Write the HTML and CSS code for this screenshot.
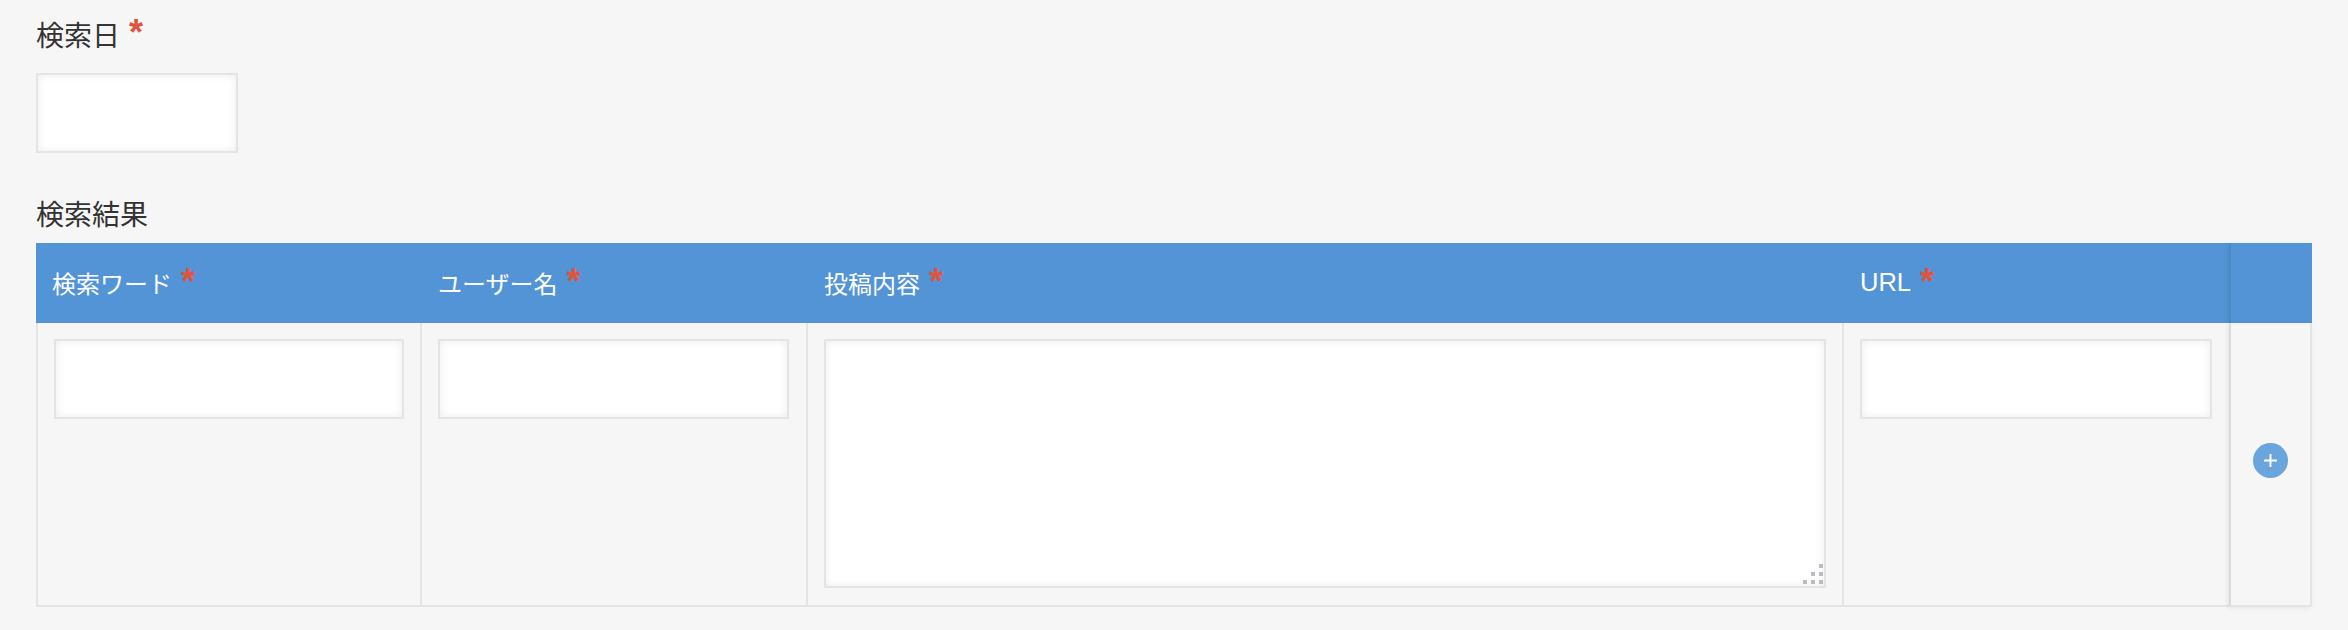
FILE: index.html
```html
<!DOCTYPE html>
<html lang="ja">
<head>
    <meta charset="UTF-8">
    <meta name="viewport" content="width=device-width, initial-scale=1.0">
    <title>検索結果</title>
    <link rel="stylesheet" href="styles.css">
</head>
<body>
    <div class="form">
        <div class="field">
            <div class="field-label">検索日<span class="required">*</span></div>
            <input type="text" class="text-input date-input">
        </div>

        <div class="field-label table-label">検索結果</div>
        <div class="sub-table">
            <div class="head-cell">検索ワード<span class="required">*</span></div>
            <div class="head-cell">ユーザー名<span class="required">*</span></div>
            <div class="head-cell">投稿内容<span class="required">*</span></div>
            <div class="head-cell"><span class="latin-label">URL</span><span class="required">*</span></div>
            <div class="head-cell action-head"></div>

            <div class="body-cell"><input type="text" class="text-input"></div>
            <div class="body-cell"><input type="text" class="text-input wide-input"></div>
            <div class="body-cell">
                <div class="textarea-wrapper">
                    <textarea class="text-area"></textarea>
                    <svg class="grip" viewBox="0 0 20 20">
                        <rect x="16" y="0" width="4" height="4"/>
                        <rect x="8" y="8" width="4" height="4"/>
                        <rect x="16" y="8" width="4" height="4"/>
                        <rect x="0" y="16" width="4" height="4"/>
                        <rect x="8" y="16" width="4" height="4"/>
                        <rect x="16" y="16" width="4" height="4"/>
                    </svg>
                </div>
            </div>
            <div class="body-cell"><input type="text" class="text-input url-input"></div>
            <div class="body-cell action-cell">
                <button class="add-button" aria-label="追加">
                    <svg viewBox="0 0 14 14">
                        <path d="M7 1v12M1 7h12"/>
                    </svg>
                </button>
            </div>
        </div>
    </div>
</body>
</html>
```

FILE: styles.css
```css
* {
    margin: 0;
    padding: 0;
    box-sizing: border-box;
}

body {
    font-family: "Liberation Sans", "Noto Sans CJK JP", sans-serif;
    background: #f6f6f6;
    color: #333;
    height: 630px;
    overflow: hidden;
}

.form {
    width: 2276px;
    margin-left: 36px;
    padding-top: 15px;
}

.field-label {
    font-size: 28px;
    line-height: 40px;
    height: 40px;
}

.required {
    display: inline-block;
    margin-left: 9px;
    color: #e0533f;
    font-size: 36px;
    font-weight: bold;
    line-height: 1;
    vertical-align: 1px;
}

.text-input {
    display: block;
    width: 350px;
    height: 80px;
    border: 2px solid #e3e5e5;
    background: #fff;
    box-shadow: inset 0 0 8px rgba(0, 0, 0, 0.08);
    outline: none;
}

.date-input {
    width: 202px;
    margin-top: 18px;
}

.wide-input {
    width: 351px;
}

.url-input {
    width: 352px;
}

.table-label {
    margin-top: 43px;
    margin-bottom: 7px;
}

.sub-table {
    display: grid;
    grid-template-columns: 384px 386px 1036px 387px 83px;
    grid-template-rows: 80px 284px;
}

.head-cell {
    display: flex;
    align-items: center;
    padding: 0 0 1px 18px;
    background: #5294d6;
    color: #fff;
    font-size: 24px;
}

.head-cell:first-child {
    padding-left: 16px;
}

.head-cell .required {
    margin-left: 9px;
    align-self: flex-start;
    margin-top: 21px;
}

.latin-label {
    font-size: 25.5px;
}

.action-head {
    border-left: 2px solid #4a89c8;
    box-shadow: -2px 0 4px rgba(0, 0, 0, 0.05);
}

.body-cell {
    padding: 16px 0 0 16px;
    border-left: 2px solid #e3e5e5;
    border-bottom: 2px solid #e3e5e5;
}

.textarea-wrapper {
    position: relative;
    width: 1002px;
    height: 249px;
}

.text-area {
    display: block;
    width: 100%;
    height: 100%;
    border: 2px solid #e3e5e5;
    background: #fff;
    box-shadow: inset 0 0 8px rgba(0, 0, 0, 0.08);
    outline: none;
    resize: none;
}

.grip {
    position: absolute;
    right: 3px;
    bottom: 4px;
    width: 20px;
    height: 20px;
    fill: #b9bdc2;
}

.action-cell {
    display: flex;
    align-items: center;
    justify-content: center;
    padding: 0 0 7px;
    border-left-color: #d9dbdb;
    border-right: 2px solid #e3e5e5;
    box-shadow: -2px 0 4px rgba(0, 0, 0, 0.05), 0 3px 6px rgba(0, 0, 0, 0.03);
}

.add-button {
    display: flex;
    align-items: center;
    justify-content: center;
    width: 35px;
    height: 35px;
    border: none;
    border-radius: 50%;
    background: #6ba5dd;
    cursor: pointer;
}

.add-button svg {
    width: 15px;
    height: 15px;
    stroke: #fff;
    stroke-width: 1.8;
    fill: none;
}
```
